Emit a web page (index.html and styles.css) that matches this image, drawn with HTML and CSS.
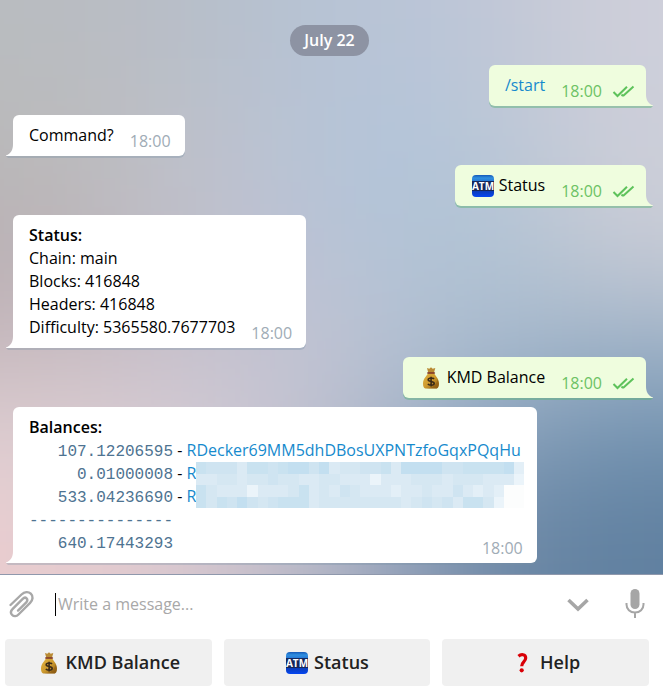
FILE: index.html
```html
<!DOCTYPE html>
<html lang="en">
<head>
<meta charset="utf-8">
<meta name="viewport" content="width=device-width, initial-scale=1">
<title>Chat</title>
<link rel="stylesheet" href="styles.css">
</head>
<body>
<svg class="defs" aria-hidden="true">
  <defs>
    <linearGradient id="atm-top" x1="0" y1="0" x2="0" y2="1">
      <stop offset="0" stop-color="#1558b8"/><stop offset="0.5" stop-color="#2f8fe0"/><stop offset="1" stop-color="#2779d6"/>
    </linearGradient>
    <linearGradient id="atm-low" x1="0" y1="0" x2="0" y2="1">
      <stop offset="0" stop-color="#0a3cb8"/><stop offset="1" stop-color="#0546f2"/>
    </linearGradient>
    <linearGradient id="gold" x1="0" y1="0" x2="1" y2="1">
      <stop offset="0" stop-color="#dfb03f"/><stop offset="0.5" stop-color="#cf9c30"/><stop offset="1" stop-color="#8a5a12"/>
    </linearGradient>
    <clipPath id="atm-clip"><rect x="1" y="1" width="22" height="22" rx="4"/></clipPath>
    <symbol id="atm" viewBox="0 0 24 24">
      <g clip-path="url(#atm-clip)">
        <rect x="1" y="1" width="22" height="6" fill="url(#atm-top)"/>
        <rect x="1" y="7" width="22" height="10" fill="#16285c"/>
        <rect x="1" y="17" width="22" height="6" fill="url(#atm-low)"/>
      </g>
      <text x="12" y="16" text-anchor="middle" class="atm-text">ATM</text>
    </symbol>
    <symbol id="bag" viewBox="0 0 24 24">
      <path d="M8 2l2.300.8L12 1.200l1.700 1.600L16.300 2l-1.500 5.200H9.400z" fill="#b98a34"/>
      <path d="M9.400 7h5.400c1 2 5.200 5.500 5.200 10.500 0 2.800-.8 4.700-2.300 5H6.300C4.800 22.200 4 20.300 4 17.500 4 12.500 8.400 9 9.400 7z" fill="url(#gold)"/>
      <path d="M18.500 13.500c1.500 3 1.800 6.500-.8 9H7c4.500-.4 10-2 11.500-9z" fill="#87560f" opacity="0.500"/>
      <path d="M8.800 7h6.600" stroke="#7e3328" stroke-width="1.500" stroke-linecap="round"/>
      <path d="M15 13c-.8-1.200-5.500-1.600-5.800.7-.3 2.400 6.100 1.300 6 3.800-.1 2.300-5.300 2.100-6.300.4M12.100 10.800v9.600" fill="none" stroke="#3a2a18" stroke-width="1.600"/>
    </symbol>
    <symbol id="question" viewBox="0 0 24 24">
      <path d="M7.500 5.200C10 2.900 14.700 3 14.700 7c0 3.800-4.200 3.900-4 8.200" fill="none" stroke="#d90007" stroke-width="3.200"/>
      <circle cx="10.700" cy="19.300" r="2.100" fill="#d90007"/>
    </symbol>
    <symbol id="read" viewBox="0 0 24 14">
      <path d="M1.500 7l4 4L15 1.800M11 11L21.500 1.500M9.500 9.500l1.500 1.500" fill="none" stroke="#5ec25b" stroke-width="2"/>
    </symbol>
    <symbol id="tail" viewBox="0 0 8 14">
      <path class="tail-shadow" d="M0 12h7v2H2z"/>
      <path class="tail-fill" d="M8 0H7c0 6-2 9.500-7 11.500V12h8z"/>
    </symbol>
  </defs>
</svg>

<main class="chat">
  <svg class="wallpaper" viewBox="0 0 7 6" preserveAspectRatio="none" aria-hidden="true">
    <defs><filter id="soften" filterUnits="userSpaceOnUse" x="-3" y="-3" width="13" height="12" color-interpolation-filters="sRGB"><feGaussianBlur stdDeviation="0.600"/></filter></defs>
    <g id="mesh" filter="url(#soften)"></g>
  </svg>

  <time class="date">July 22</time>

  <article class="bubble out">
    <div class="foot"><p><a href="#start">/start</a></p><span class="meta">18:00<svg class="read"><use href="#read"/></svg></span></div>
    <svg class="tail"><use href="#tail"/></svg>
  </article>

  <article class="bubble in">
    <div class="foot"><p>Command?</p><span class="meta">18:00</span></div>
    <svg class="tail"><use href="#tail"/></svg>
  </article>

  <article class="bubble out">
    <div class="foot"><p class="label"><svg class="emoji"><use href="#atm"/></svg>Status</p><span class="meta">18:00<svg class="read"><use href="#read"/></svg></span></div>
    <svg class="tail"><use href="#tail"/></svg>
  </article>

  <article class="bubble in">
    <p><strong>Status:</strong></p>
    <p>Chain: main</p>
    <p>Blocks: 416848</p>
    <p>Headers: 416848</p>
    <div class="foot"><p>Difficulty: 5365580.7677703</p><span class="meta">18:00</span></div>
    <svg class="tail"><use href="#tail"/></svg>
  </article>

  <article class="bubble out">
    <div class="foot"><p class="label"><svg class="emoji"><use href="#bag"/></svg>KMD Balance</p><span class="meta">18:00<svg class="read"><use href="#read"/></svg></span></div>
    <svg class="tail"><use href="#tail"/></svg>
  </article>

  <article class="bubble in">
    <p><strong>Balances:</strong></p>
    <p class="address"><code>   107.12206595</code> - <a href="#address">RDecker69MM5dhDBosUXPNTzfoGqxPQqHu</a></p>
    <div class="hidden-rows">
      <div>
        <p><code>     0.01000008</code> - <a href="#address">R</a></p>
        <p><code>   533.04236690</code> - <a href="#address">R</a></p>
      </div>
      <svg class="mosaic" viewBox="0 0 32 4" preserveAspectRatio="none" shape-rendering="crispEdges" aria-hidden="true"><g id="mosaic"></g></svg>
    </div>
    <p><code>---------------</code></p>
    <div class="foot"><p><code>   640.17443293</code></p><span class="meta">18:00</span></div>
    <svg class="tail"><use href="#tail"/></svg>
  </article>
</main>

<footer class="panel">
  <form class="composer">
    <button type="button" class="tool" aria-label="Attach">
      <svg class="clip" viewBox="0 0 28 30"><path d="M2.500 15L13.500 4.500c3-2.800 6.800-3.200 9.300-.8 2.600 2.500 2.200 6.300-.7 9.200L10.500 24.500c-2 2-4.600 2.200-6.300.5s-1.500-4.200.5-6.200l10-10c1.300-1.300 2.900-1.400 3.900-.4 1.100 1.100 1 2.600-.3 3.900L10 20.600" transform="translate(1 1)" fill="none" stroke="#a8a8a8" stroke-width="2.400" stroke-linecap="round"/></svg>
    </button>
    <input class="message" type="text" placeholder="Write a message..." aria-label="Message">
    <button type="button" class="tool chevron" aria-label="Hide keyboard">
      <svg viewBox="0 0 24 16" width="24" height="16"><path d="M2.500 4L12 13l9.500-9" fill="none" stroke="#a6a6a6" stroke-width="3.600"/></svg>
    </button>
    <button type="button" class="tool" aria-label="Record voice">
      <svg viewBox="0 0 20 30" width="20" height="30"><rect x="5.500" y="0" width="9" height="20" rx="4.500" fill="#a6a6a6"/><path d="M1.500 14v1.500c0 4.500 3.500 8 8.500 8s8.500-3.500 8.500-8V14M10 23.500V29" fill="none" stroke="#a6a6a6" stroke-width="2"/></svg>
    </button>
  </form>
  <div class="keys">
    <button type="button" class="key"><svg class="emoji"><use href="#bag"/></svg>KMD Balance</button>
    <button type="button" class="key"><svg class="emoji"><use href="#atm"/></svg>Status</button>
    <button type="button" class="key"><svg class="emoji"><use href="#question"/></svg>Help</button>
  </div>
</footer>
<script src="chat.js"></script>
</body>
</html>
```

FILE: styles.css
```css
* {
  box-sizing: border-box;
}

body {
  margin: 0;
  min-height: 100vh;
  display: flex;
  flex-direction: column;
  background: #fff;
  color: #000;
  font: 16px/23px "Open Sans", "Noto Sans", sans-serif;
}

p {
  margin: 0;
  white-space: pre;
}

a {
  color: #168acd;
  text-decoration: none;
}

strong {
  font-weight: 600;
}

code {
  color: #4e7391;
  font: 16px/1 "Liberation Mono", monospace;
}

svg {
  display: block;
  flex: none;
}

.defs {
  position: absolute;
  width: 0;
  height: 0;
}

.atm-text {
  font: 700 10px "Open Sans", sans-serif;
  fill: #fff;
}

.chat {
  position: relative;
  flex: 1;
  display: flex;
  flex-direction: column;
  gap: 9px;
  padding: 25px 17px 11px 13px;
  overflow: hidden;
  border-bottom: 1px solid #8f98ac;
  background: #b7c0d0;
}

.wallpaper {
  position: absolute;
  inset: 0;
  width: 100%;
  height: 100%;
}

.date {
  position: relative;
  align-self: center;
  padding: 4px 14px;
  border-radius: 16px;
  background: #8d93a3;
  color: #fff;
  font-weight: 600;
}

.bubble {
  position: relative;
  padding: 9px 14px 3px 16px;
  border-radius: 6px;
  background: var(--fill);
  box-shadow: 0 2px 0 var(--shade);
}

.in {
  --fill: #fff;
  --shade: rgba(116, 142, 162, 0.3);
  align-self: flex-start;
  border-bottom-left-radius: 0;
}

.out {
  --fill: #effdde;
  --shade: rgba(90, 180, 120, 0.45);
  align-self: flex-end;
  padding-right: 10px;
  border-bottom-right-radius: 0;
}

.foot {
  display: flex;
  align-items: flex-end;
  justify-content: space-between;
  gap: 16px;
}

.foot p {
  padding-bottom: 6px;
}

.meta {
  display: flex;
  align-items: center;
  gap: 10px;
  color: #a0acb6;
}

.out .meta {
  color: #6cc264;
}

.read {
  width: 24px;
  height: 14px;
}

.label {
  display: flex;
  align-items: center;
  gap: 4px;
}

.emoji {
  width: 24px;
  height: 24px;
  margin: -1px 0;
}

.tail {
  position: absolute;
  bottom: -2px;
  left: -7px;
  width: 8px;
  height: 14px;
}

.out .tail {
  left: auto;
  right: -7px;
  transform: scaleX(-1);
}

.tail-fill {
  fill: var(--fill);
}

.tail-shadow {
  fill: var(--shade);
}

.address {
  padding-right: 2px;
}

.hidden-rows {
  display: flex;
  margin-right: -2px;
}

.mosaic {
  flex: 1;
  width: 0;
  min-width: 0;
  height: 46px;
}

.composer {
  display: flex;
  align-items: center;
  height: 64px;
  padding: 0 18px 6px 7px;
}

.tool {
  display: flex;
  padding: 0;
  border: 0;
  background: none;
}

.clip {
  width: 28px;
  height: 30px;
}

.message {
  flex: 1;
  min-width: 0;
  height: 23px;
  margin-left: 20px;
  padding: 0 0 0 2px;
  border: 0;
  border-left: 1px solid #000;
  outline: 0;
  background: none;
  font: inherit;
}

.message::placeholder {
  color: #a8a8a8;
}

.chevron {
  margin-right: 35px;
}

.keys {
  display: grid;
  grid-template-columns: repeat(3, 1fr);
  gap: 12px;
  padding: 0 14px 5px 5px;
}

.key {
  display: flex;
  align-items: center;
  justify-content: center;
  gap: 5px;
  height: 47px;
  padding: 0;
  border: 0;
  border-radius: 4px;
  background: #f0f0f0;
  color: #222;
  font: 600 18px/23px "Open Sans", sans-serif;
}
```

FILE: chat.js
```js
const NS = "http://www.w3.org/2000/svg";

function cell(parent, x, y, w, h, fill) {
  const r = document.createElementNS(NS, "rect");
  r.setAttribute("x", x);
  r.setAttribute("y", y);
  r.setAttribute("width", w);
  r.setAttribute("height", h);
  r.setAttribute("fill", fill);
  parent.appendChild(r);
}

// Wallpaper: a coarse colour grid that the blur filter melts together.
const mesh = [
  "b9bcc0 b9bdc5 b6c0cd b7c4d6 bac5d7 c3c8d6 cecfda",
  "bbbaba bfc0c5 bdc2d0 b5c4d8 b2c6da bec7d6 ccced9",
  "b9b1b4 bebcc4 bfc1d0 b7c3d7 b0c3d5 b3c4d4 cbcdd6",
  "c5b6bb c6bcc6 c3c1cf c0c3d3 b0c0d2 a9bacd a4b6ca",
  "dccfd3 d9cfd6 cdc9d4 bdc0d0 9fb0c6 86a0ba 7494b2",
  "e9cccf dfcad0 cdc3cd b0b4c5 8799b3 6986a4 6080a0"
];
const meshGroup = document.getElementById("mesh");
mesh.forEach((row, y) => row.split(" ").forEach((c, x) => {
  const left = x === 0 ? -3 : x;
  const right = x === 6 ? 10 : x + 1.02;
  const top = y === 0 ? -3 : y;
  const bottom = y === 5 ? 9 : y + 1.02;
  cell(meshGroup, left, top, right - left, bottom - top, "#" + c);
}));

// Pixelated cover over the two private addresses.
const tones = { a: "#c3dff0", b: "#c9e2f0", c: "#cfe4f1", d: "#d5e7f2", e: "#dbeaf4", f: "#e3eff7", g: "#ebf4fa", h: "#fcfdfd" };
const mosaic = [
  "bcccebbcbaacaeddccbeaaaaccbbbbaf",
  "eeddeddcddeeddeeegeeedddedddeeeg",
  "bdeeegeeedbedecdeeefeedeecefefhh",
  "bdbcacdcbbbeddddddddedcdcebbdghh"
];
const mosaicGroup = document.getElementById("mosaic");
mosaic.forEach((row, y) => [...row].forEach((t, x) => cell(mosaicGroup, x, y, 1, 1, tones[t])));
```
